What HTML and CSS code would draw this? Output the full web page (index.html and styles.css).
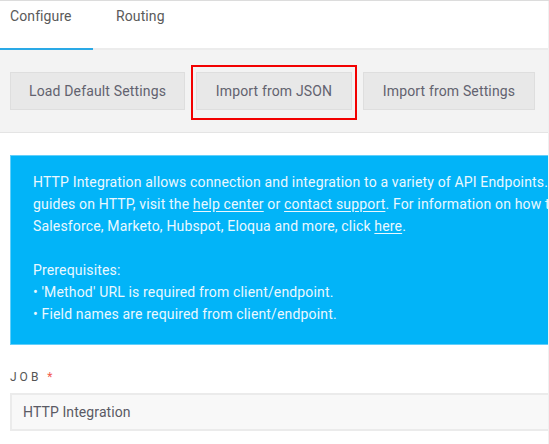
FILE: index.html
```html
<!DOCTYPE html>
<html>
<head>
<meta charset="utf-8">
<link rel="stylesheet" href="styles.css">
</head>
<body>
<div class="frame">
  <div class="tabs">
    <div class="tab active">Configure</div>
    <div class="tab">Routing</div>
  </div>
  <div class="toolbar">
    <button class="btn btn-load">Load Default Settings</button>
    <div class="highlight-wrap">
      <button class="btn btn-json">Import from JSON</button>
      <div class="highlight"></div>
    </div>
    <button class="btn btn-settings">Import from Settings</button>
  </div>
  <div class="content">
    <div class="info">
      <p>HTTP Integration allows connection and integration to a variety of API Endpoints. For guides on HTTP, visit the <a href="#">help center</a> or <a href="#">contact support</a>. For information on how to use Salesforce, Marketo, Hubspot, Eloqua and more, click <a href="#">here</a>.</p>
      <p class="gap">Prerequisites:</p>
      <p>• 'Method' URL is required from client/endpoint.</p>
      <p>• Field names are required from client/endpoint.</p>
    </div>
    <div class="field">
      <label class="label">JOB <span class="req">*</span></label>
      <div class="input">HTTP Integration</div>
    </div>
  </div>
  <div class="edge"></div>
</div>
</body>
</html>
```

FILE: styles.css
```css
html, body {
  margin: 0;
  padding: 0;
  background: #fff;
}
body {
  font-family: Roboto, "Noto Sans", sans-serif;
  color: #555;
}
.frame {
  position: relative;
  width: 549px;
  height: 444px;
  overflow: hidden;
  border-top: 1px solid #dcdcdc;
  box-sizing: border-box;
}
.tabs {
  display: flex;
  height: 47px;
  border-bottom: 2px solid #ececec;
}
.tab {
  font-size: 14px;
  line-height: 20px;
  padding: 5px 0 0 10px;
  color: #5a5a5a;
  box-sizing: border-box;
  letter-spacing: 0.1px;
}
.tab.active {
  width: 93px;
  border-bottom: 2px solid #2aa9e6;
  margin-bottom: -2px;
}
.tab + .tab {
  padding-left: 23px;
}
.toolbar {
  display: flex;
  align-items: flex-start;
  gap: 11px;
  background: #f3f3f3;
  padding: 22px 10px 22px;
  height: 83px;
  box-sizing: border-box;
  border-bottom: 1px solid #e4e4e4;
  white-space: nowrap;
}
.btn {
  font-family: Roboto, "Noto Sans", sans-serif;
  font-size: 14px;
  letter-spacing: 0.15px;
  color: #62626f;
  background: #e8e8e8;
  border: 1px solid #dedede;
  height: 38px;
  padding: 0;
  border-radius: 0;
  flex: none;
}
.btn-load { width: 175px; }
.btn-json { width: 156px; }
.btn-settings { width: 172px; }
.highlight-wrap {
  position: relative;
  display: flex;
}
.highlight {
  position: absolute;
  left: -5px;
  right: -5px;
  top: -7px;
  bottom: -10px;
  border: 2px solid #f20000;
}
.content {
  padding: 22px 0 0 10px;
  width: 700px;
}
.info {
  background: #02b4f8;
  border: 1px solid #62cffa;
  border-right: none;
  color: #eaf8ff;
  font-size: 14px;
  letter-spacing: 0.16px;
  line-height: 22px;
  padding: 15px 0 19px 22px;
  width: 700px;
  box-sizing: border-box;
}
.info p {
  margin: 0;
  width: 575px;
}
.info p.gap {
  margin-top: 22px;
}
.info a {
  color: #eaf8ff;
  text-decoration: underline;
  text-underline-offset: 2px;
}
.field {
  padding-top: 24px;
}
.label {
  display: block;
  font-size: 12px;
  letter-spacing: 3px;
  line-height: 16px;
  color: #555;
  margin-bottom: 8px;
}
.req {
  color: #f25a4e;
  letter-spacing: 0;
}
.input {
  background: #f8f8f8;
  border: 2px solid #ebebeb;
  border-right: none;
  height: 38px;
  box-sizing: border-box;
  font-size: 14px;
  letter-spacing: 0.1px;
  line-height: 34px;
  padding-left: 11px;
  color: #5a5a64;
  width: 700px;
}
.edge {
  position: absolute;
  top: 0;
  right: 0;
  width: 1px;
  height: 100%;
  background: #f0f0f0;
}
```
